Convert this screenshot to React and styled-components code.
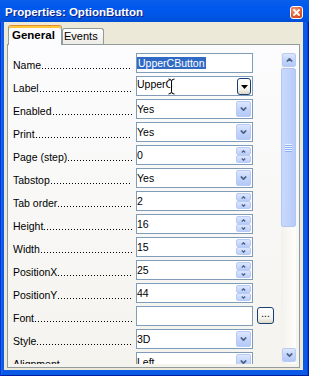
import React from "react"
import styled, { createGlobalStyle } from "styled-components"

const GlobalStyle = createGlobalStyle`
  html, body {
    margin: 0;
    padding: 0;
    background: #0054e3;
  }
  body {
    font-family: "Liberation Sans", Arial, sans-serif;
  }
`

const Window = styled.div`
  width: 309px;
  height: 376px;
  display: flex;
  flex-direction: column;
  overflow: hidden;
  background: #0a5ae6;
  box-shadow: inset 1px 0 #0831d9, inset -1px 0 #001ea0, inset 0 -1px #001ea0,
    inset 2px 0 #166aee, inset -2px 0 #0343d8;
`

const TitleBar = styled.div`
  flex: none;
  height: 22px;
  display: flex;
  align-items: flex-start;
  padding: 0 6px 0 5px;
  background: linear-gradient(#0a5ee8, #0058ee 35%, #0055e5 75%, #004fd6);
`

const Title = styled.span`
  flex: 1;
  margin-top: 6px;
  line-height: 13px;
  color: #fff;
  font: bold 11.5px "Liberation Sans", Arial, sans-serif;
  text-shadow: 1px 1px #0f1f87;
  white-space: nowrap;
`

const CloseButton = styled.div`
  margin-top: 6px;
  width: 13px;
  height: 13px;
  box-sizing: border-box;
  border: 1px solid #fff;
  border-radius: 3px;
  background: radial-gradient(circle at 35% 30%, #f0a080, #e0582c 60%, #c53f12);
  display: flex;
  align-items: center;
  justify-content: center;
`

const Body = styled.div`
  flex: 1;
  min-height: 0;
  margin: 0 6px 6px 4px;
  padding: 3px 3px 2px 3px;
  background: #ece9d8;
  display: flex;
  flex-direction: column;
`

const TabStrip = styled.div`
  flex: none;
  height: 19px;
  padding-left: 1px;
  display: flex;
  align-items: flex-end;
  position: relative;
  z-index: 1;
`

const Tab = styled.div`
  box-sizing: border-box;
  border: 1px solid #919b9c;
  border-bottom: none;
  border-radius: 3px 3px 0 0;
  white-space: nowrap;
  color: #000;
  ${(p) =>
    p.$active
      ? `
    width: 54px;
    height: 20px;
    margin-bottom: -1px;
    padding: 2px 0 0 3px;
    border-top: 1px solid #e68b2c;
    box-shadow: inset 0 2px #ffc73c;
    background: #fcfcfe;
    font: bold 11.5px "Liberation Sans", Arial, sans-serif;
    line-height: 14px;
  `
      : `
    height: 16px;
    padding: 1px 5px 0 1px;
    background: linear-gradient(#ffffff, #ecebe5);
    font: 11px "Liberation Sans", Arial, sans-serif;
    line-height: 12px;
  `}
`

const Panel = styled.div`
  flex: 1;
  min-height: 0;
  border: 1px solid #919b9c;
  background: linear-gradient(#fcfcfe, #f4f3ee);
  padding: 8px 3px 3px 0;
  display: flex;
  gap: 1px;
`

const List = styled.div`
  flex: 1;
  min-width: 0;
  overflow: hidden;
  padding-left: 5px;
  display: flex;
  flex-direction: column;
  gap: 3px;
  font-size: 10.5px;
  color: #000;
`

const Row = styled.div`
  flex: none;
  display: grid;
  grid-template-columns: 119px 117px auto;
  column-gap: 4px;
  height: 20px;
`

const LabelCell = styled.div`
  display: flex;
  align-items: flex-start;
  overflow: hidden;
`

const LabelText = styled.span`
  margin-top: 6px;
  line-height: 12px;
  white-space: nowrap;
`

const Leader = styled.span`
  flex: 1;
  height: 1px;
  margin: 15px 0 0 1px;
  background: linear-gradient(90deg, #000 1px, transparent 1px) 0 0 / 3px 1px repeat-x;
`

const Field = styled.div`
  position: relative;
  box-sizing: border-box;
  height: 20px;
  border: 1px solid #7f9db9;
  background: #fff;
  display: flex;
  align-items: ${(p) => (p.$top ? "flex-start" : "center")};
  padding-top: ${(p) => (p.$top ? "1px" : "0")};
`

const Value = styled.span`
  flex: 1;
  line-height: 13px;
  white-space: nowrap;
  overflow: hidden;
`

const Selected = styled.span`
  padding: 0 1px;
  background: #316ac5;
  color: #fff;
`

const XpButton = styled.div`
  flex: none;
  box-sizing: border-box;
  width: 15px;
  height: 16px;
  margin-right: 1px;
  border: 1px solid #b8cbf6;
  border-radius: 2px;
  background: linear-gradient(#dce6fe, #c1d3fb 55%, #b4c9f7);
  display: flex;
  align-items: center;
  justify-content: center;
`

const SpinBox = styled.div`
  flex: none;
  width: 15px;
  height: 16px;
  margin-right: 1px;
  display: flex;
  flex-direction: column;
`

const SpinHalf = styled.div`
  flex: 1;
  box-sizing: border-box;
  border: 1px solid #b8cbf6;
  border-radius: 2px;
  background: linear-gradient(#dce6fe, #bccffa);
  display: flex;
  align-items: center;
  justify-content: center;
`

const ClassicButton = styled.div`
  flex: none;
  box-sizing: border-box;
  width: ${(p) => p.$w}px;
  height: ${(p) => p.$h}px;
  border: 1px solid #1c3f74;
  border-radius: 3px;
  background: linear-gradient(#ffffff, #f3f2ec 70%, #dcd8c8);
  display: flex;
  align-items: center;
  justify-content: center;
  font-size: 10px;
  line-height: 10px;
`

const DialogButton = styled(ClassicButton)`
  margin-top: 1px;
  align-items: flex-end;
  padding-bottom: 4px;
`

const Cursor = styled.svg`
  position: absolute;
  left: 31px;
  top: 1px;
`

const ScrollBar = styled.div`
  flex: none;
  width: 15px;
  display: flex;
  flex-direction: column;
  background: linear-gradient(90deg, #f3f1ec, #fefefb);
`

const ScrollArrow = styled(XpButton)`
  width: 14px;
  height: 14px;
  margin: ${(p) => (p.$down ? "auto 0 2px 1px" : "0 0 0 1px")};
`

const Thumb = styled.div`
  box-sizing: border-box;
  margin-top: 1px;
  height: 159px;
  border: 1px solid #b1c6f4;
  border-radius: 2px;
  background: linear-gradient(90deg, #c9d8fc, #c1d3fb 50%, #b7cbf8);
  display: flex;
  align-items: center;
  justify-content: center;
`

const Grip = styled.div`
  width: 7px;
  height: 8px;
  background: repeating-linear-gradient(#eef4fe 0 1px, #8cb0f8 1px 2px);
`

const Chevron = ({ up, small }) => {
  const w = small ? 5 : 7
  const h = small ? 3 : 4
  const d = up
    ? `M0.8 ${h - 0.5} L${w / 2} 0.8 L${w - 0.8} ${h - 0.5}`
    : `M0.8 0.5 L${w / 2} ${h - 0.8} L${w - 0.8} 0.5`
  return (
    <svg width={w} height={h} viewBox={`0 0 ${w} ${h}`}>
      <path d={d} fill="none" stroke="#4d6185" strokeWidth={small ? 1.3 : 1.7} />
    </svg>
  )
}

const rows = [
  { label: "Name", value: "UpperCButton", kind: "text", selected: true },
  { label: "Label", value: "UpperC", kind: "multi" },
  { label: "Enabled", value: "Yes", kind: "list" },
  { label: "Print", value: "Yes", kind: "list" },
  { label: "Page (step)", value: "0", kind: "spin" },
  { label: "Tabstop", value: "Yes", kind: "list" },
  { label: "Tab order", value: "2", kind: "spin" },
  { label: "Height", value: "16", kind: "spin" },
  { label: "Width", value: "15", kind: "spin" },
  { label: "PositionX", value: "25", kind: "spin" },
  { label: "PositionY", value: "44", kind: "spin" },
  { label: "Font", value: "", kind: "dialog" },
  { label: "Style", value: "3D", kind: "list" },
  { label: "Alignment", value: "Left", kind: "list" },
]

const PropertyRow = ({ row }) => (
  <Row>
    <LabelCell>
      <LabelText>{row.label}</LabelText>
      <Leader />
    </LabelCell>
    <Field $top={row.kind === "multi"}>
      <Value>{row.selected ? <Selected>{row.value}</Selected> : row.value}</Value>
      {row.kind === "list" && (
        <XpButton>
          <Chevron />
        </XpButton>
      )}
      {row.kind === "spin" && (
        <SpinBox>
          <SpinHalf>
            <Chevron up small />
          </SpinHalf>
          <SpinHalf>
            <Chevron small />
          </SpinHalf>
        </SpinBox>
      )}
      {row.kind === "multi" && (
        <>
          <ClassicButton $w={14} $h={17} style={{ marginRight: 1, marginTop: 0 }}>
            <svg width="7" height="4" viewBox="0 0 7 4">
              <path d="M0 0 H7 L3.5 4 Z" fill="#000" />
            </svg>
          </ClassicButton>
          <Cursor width="7" height="17" viewBox="0 0 7 17">
            <path
              d="M0.5 1 Q3.5 1 3.5 3.5 V13.5 Q3.5 16 0.5 16 M6.5 1 Q3.5 1 3.5 3.5 M3.5 13.5 Q3.5 16 6.5 16"
              fill="none"
              stroke="#fff"
              strokeWidth="2.6"
            />
            <path
              d="M0.5 1 Q3.5 1 3.5 3.5 V13.5 Q3.5 16 0.5 16 M6.5 1 Q3.5 1 3.5 3.5 M3.5 13.5 Q3.5 16 6.5 16"
              fill="none"
              stroke="#000"
              strokeWidth="1"
            />
          </Cursor>
        </>
      )}
    </Field>
    {row.kind === "dialog" && (
      <DialogButton $w={17} $h={17}>
        ...
      </DialogButton>
    )}
  </Row>
)

export default function App() {
  return (
    <>
      <GlobalStyle />
      <Window>
        <TitleBar>
          <Title>Properties: OptionButton</Title>
          <CloseButton>
            <svg width="7" height="7" viewBox="0 0 7 7">
              <path d="M1 1 L6 6 M6 1 L1 6" stroke="#fff" strokeWidth="1.8" strokeLinecap="square" />
            </svg>
          </CloseButton>
        </TitleBar>
        <Body>
          <TabStrip>
            <Tab $active>General</Tab>
            <Tab>Events</Tab>
          </TabStrip>
          <Panel>
            <List>
              {rows.map((row) => (
                <PropertyRow key={row.label} row={row} />
              ))}
            </List>
            <ScrollBar>
              <ScrollArrow>
                <Chevron up />
              </ScrollArrow>
              <Thumb>
                <Grip />
              </Thumb>
              <ScrollArrow $down>
                <Chevron />
              </ScrollArrow>
            </ScrollBar>
          </Panel>
        </Body>
      </Window>
    </>
  )
}
